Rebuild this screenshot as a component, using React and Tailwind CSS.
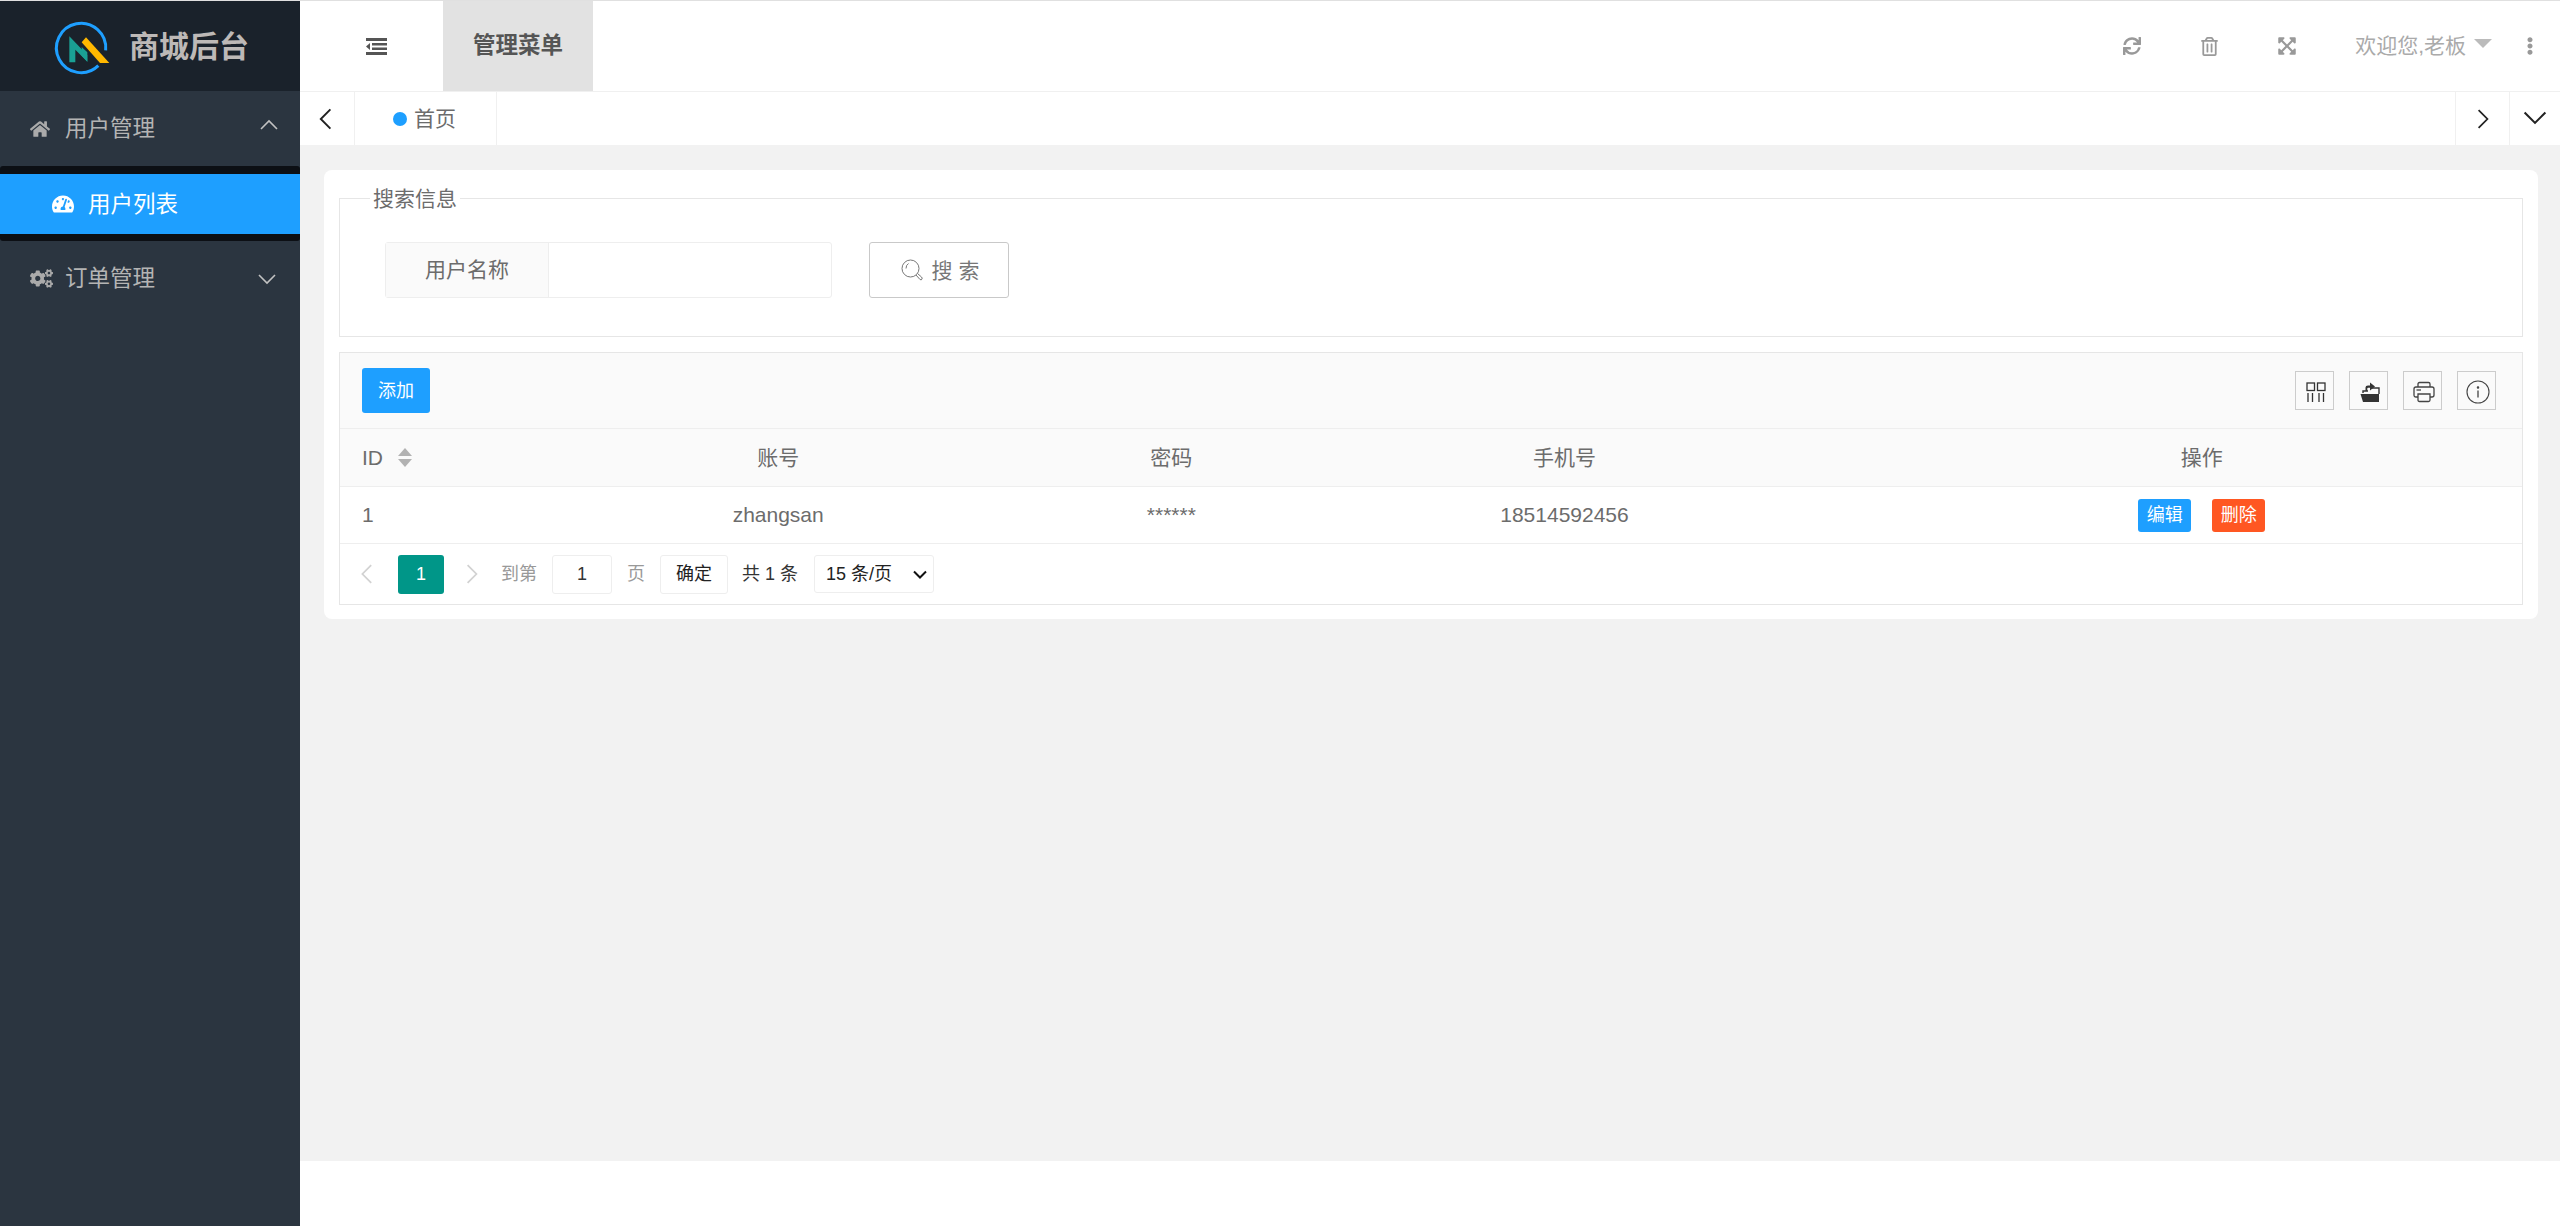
import { FaHome, FaTachometerAlt, FaCogs, FaSync, FaRegTrashAlt, FaExpandArrowsAlt, FaEllipsisV } from 'react-icons/fa';

const Chevron = ({ dir, className }) => {
  const paths = {
    up: 'M2 12 L10 4 L18 12',
    down: 'M2 5 L10 13 L18 5',
    left: 'M12 2 L4 10 L12 18',
    right: 'M6 2 L14 10 L6 18',
  };
  return (
    <svg viewBox="0 0 20 20" fill="none" stroke="currentColor" strokeWidth="1.6" className={className}>
      <path d={paths[dir]} />
    </svg>
  );
};

const Logo = () => (
  <svg viewBox="0 0 198 180" className="w-[66px] h-[60px] shrink-0 mt-[5px]">
    <path d="M145 140 A74 74 0 1 1 167 94" fill="none" stroke="#1e9fff" strokeWidth="9" />
    <path d="M58 52 L112 108 L112 128 L76 92 L76 130 L58 130 Z" fill="#1aa094" />
    <path d="M95 84 L112 100 L112 128 L95 110 Z" fill="#1aa094" />
    <path d="M95 70 L108 55 L178 132 L150 132 Z" fill="#ffb800" />
  </svg>
);

// menu collapse button
const ShrinkIcon = () => (
  <svg viewBox="0 0 21 17" fill="#555" className="w-[21px] h-[17px]">
    <rect width="21" height="3" />
    <rect x="6" y="5" width="15" height="2.5" />
    <rect x="6" y="9.5" width="15" height="2.5" />
    <rect y="14" width="21" height="3" />
    <path d="M4 5 L0 8.5 L4 12 Z" />
  </svg>
);

const ColsIcon = () => (
  <svg viewBox="0 0 20 20" fill="none" stroke="#333" strokeWidth="1.3" className="w-5 h-5">
    <rect x="1" y="1" width="7.5" height="7.5" />
    <rect x="11.5" y="1" width="7.5" height="7.5" />
    <path d="M2 11 V20 M6.5 11 V20 M13 11 V20 M17.5 11 V20" />
  </svg>
);

const ExportIcon = () => (
  <svg viewBox="0 0 20 20" className="w-5 h-5">
    <path d="M0.5 12 H19 V20 H3 Z" fill="#333" />
    <path d="M3 11 V9 H8 M12 6 H19 V12" fill="none" stroke="#333" strokeWidth="1.4" />
    <path d="M5.5 9 V5.5 Q5.5 3.5 8 3.5 H10 V0.5 L15 4.5 L10 8.5 V5.8 H8 Q7.3 5.8 7.3 6.6 V9 Z" fill="#333" />
  </svg>
);

const PrintIcon = () => (
  <svg viewBox="0 0 22 22" fill="none" stroke="#444" strokeWidth="1.3" className="w-[22px] h-[22px]">
    <path d="M5 6 V3 Q5 1.5 6.5 1.5 H15.5 Q17 1.5 17 3 V6" />
    <path d="M5 16 H3 Q1 16 1 14 V8 Q1 6 3 6 H19 Q21 6 21 8 V14 Q21 16 19 16 H17" />
    <path d="M5 13 H17 V19 Q17 20.5 15.5 20.5 H6.5 Q5 20.5 5 19 Z" />
    <path d="M3.5 9 H8" />
  </svg>
);

const InfoIcon = () => (
  <svg viewBox="0 0 24 24" fill="none" stroke="#444" strokeWidth="1.1" className="w-6 h-6">
    <circle cx="12" cy="12" r="11" />
    <path d="M12 10.5 V17.5" strokeWidth="1.3" />
    <circle cx="12" cy="7.5" r="0.7" fill="#444" />
  </svg>
);

const SearchIcon = () => (
  <svg viewBox="0 0 22 22" fill="none" stroke="#777" strokeWidth="1" className="w-[22px] h-[22px]">
    <circle cx="9.5" cy="9.5" r="8.5" />
    <path d="M5 9.5 Q5 6 7.5 4.5" />
    <path d="M15 16 L19 20.5 Q20.5 21.5 21 20 Q21.5 19 20.5 18 L16.5 14.5" />
  </svg>
);

const toolIcons = [ColsIcon, ExportIcon, PrintIcon, InfoIcon];

const tableRow = 'grid grid-cols-[119px_1fr_148px_1fr_1fr] items-center text-center';

export default function App() {
  return (
    <div
      className="flex flex-col h-screen overflow-hidden bg-white text-[21px] text-[#6c6c6c]"
      style={{ fontFamily: '"Liberation Sans", "Noto Sans CJK SC", sans-serif' }}
    >
      <div className="h-px shrink-0 bg-[#e0e0e0]" />
      <div className="flex flex-1 min-h-0">
        {/* Sidebar */}
        <aside className="w-[300px] shrink-0 bg-[#2b3540] text-[22.5px] text-[#b4b4b4]">
          <div className="h-[90px] bg-[#1a222b] flex items-center pl-[50px]">
            <Logo />
            <span className="ml-[13px] text-[30px] font-bold text-[#bdb9b7]">商城后台</span>
          </div>
          <div className="relative h-[75px] flex items-center pl-[30px]">
            <FaHome className="w-[20px] h-[20px] text-[#aaa]" />
            <span className="ml-[15px] mt-[1px]">用户管理</span>
            <Chevron dir="up" className="absolute right-[21px] top-[26px] w-[20px] h-[20px] text-[#c2c2c2]" />
          </div>
          <div className="h-[75px] bg-[#0c0f14] rounded-[3px] pt-[8px]">
            <div className="h-[60px] bg-[#1e9fff] flex items-center pl-[52px] text-white">
              <FaTachometerAlt className="w-[22px] h-[22px]" />
              <span className="ml-[14px] mt-[1px]">用户列表</span>
            </div>
          </div>
          <div className="relative h-[75px] flex items-center pl-[30px]">
            <FaCogs className="w-[23px] h-[23px] text-[#aaa]" />
            <span className="ml-[12px] mt-[1px]">订单管理</span>
            <Chevron dir="down" className="absolute right-[23px] top-[29px] w-[20px] h-[20px] text-[#c2c2c2]" />
          </div>
        </aside>

        <div className="flex-1 min-w-0 flex flex-col">
          {/* Top bar */}
          <header className="h-[90px] shrink-0 flex items-center">
            <div className="w-[143px] pl-[66px]">
              <ShrinkIcon />
            </div>
            <div className="w-[150px] h-full bg-[#e2e2e2] flex items-center justify-center text-[22.5px] font-bold text-[#555]">
              管理菜单
            </div>
            <div className="ml-auto flex items-center text-[#aaa]">
              <div className="w-[77px] flex justify-center"><FaSync className="w-[18px] h-[18px] text-[#999]" /></div>
              <div className="w-[78px] flex justify-center"><FaRegTrashAlt className="w-[17px] h-[19px] text-[#999]" /></div>
              <div className="w-[77px] flex justify-center"><FaExpandArrowsAlt className="w-[20px] h-[20px] text-[#999]" /></div>
              <span className="ml-[30px]">欢迎您,老板</span>
              <span className="ml-[8px] mb-[6px] w-0 h-0 border-x-[9px] border-x-transparent border-t-[9px] border-t-[#bbb]" />
              <div className="w-[68px] flex justify-center pl-[7px]"><FaEllipsisV className="w-[18px] h-[18px] text-[#999]" /></div>
            </div>
          </header>

          {/* Tab strip */}
          <div className="h-[54px] shrink-0 flex border-t border-[#f0f0f0] bg-white">
            <div className="w-[55px] flex items-center justify-center pl-[2px] border-r border-[#f0f0f0] text-[#222]">
              <Chevron dir="left" className="w-[24px] h-[24px]" />
            </div>
            <div className="w-[142px] flex items-center pl-[38px] border-r border-[#f0f0f0]">
              <span className="w-[14px] h-[14px] rounded-full bg-[#1e9fff]" />
              <span className="ml-[7px]">首页</span>
            </div>
            <div className="ml-auto w-[54px] flex items-center justify-center border-l border-[#f0f0f0] text-[#222]">
              <Chevron dir="right" className="w-[22px] h-[22px]" />
            </div>
            <div className="w-[51px] flex items-center justify-center border-l border-[#f0f0f0] text-[#222]">
              <Chevron dir="down" className="w-[26px] h-[26px]" />
            </div>
          </div>

          {/* Content */}
          <main className="flex-1 min-h-0 bg-[#f2f2f2] pt-[25px] pl-[24px] pr-[22px]">
            <div className="bg-white rounded-[8px] px-[15px] pt-[12px] pb-[14px]">
              <fieldset className="border border-[#e6e6e6]">
                <legend className="ml-[30px] px-[3px] pt-[2px] leading-[30px]">搜索信息</legend>
                <div className="flex pl-[45px] pt-[28px] pb-[38px]">
                  <div className="flex w-[447px] h-[56px] border border-[#eee] rounded-[3px]">
                    <div className="w-[163px] bg-[#fafafa] border-r border-[#eee] flex items-center justify-center">用户名称</div>
                    <input className="flex-1 min-w-0 outline-none px-3" />
                  </div>
                  <button className="ml-[37px] w-[140px] h-[56px] border border-[#c9c9c9] rounded-[3px] flex items-center justify-center pl-[2px] text-[#777]">
                    <SearchIcon />
                    <span className="ml-[9px] mt-[2px]">搜 索</span>
                  </button>
                </div>
              </fieldset>

              <div className="mt-[15px] border border-[#e6e6e6]">
                <div className="h-[75px] bg-[#fafafa] flex items-center pl-[22px] pr-[26px]">
                  <button className="w-[68px] h-[45px] rounded-[3px] bg-[#1e9fff] text-white text-[18px] pt-[1px]">添加</button>
                  <div className="ml-auto flex gap-[15px]">
                    {toolIcons.map((Icon, i) => (
                      <div key={i} className="w-[39px] h-[39px] border border-[#ccc] flex items-center justify-center pl-[2px] pt-[2px]">
                        <Icon />
                      </div>
                    ))}
                  </div>
                </div>

                <div className={`${tableRow} h-[58px] bg-[#fafafa] border-t border-[#eee]`}>
                  <div className="pl-[22px] flex items-center">
                    ID
                    <span className="ml-[15px] flex flex-col gap-[3px]">
                      <span className="w-0 h-0 border-x-[7px] border-x-transparent border-b-[8px] border-b-[#b2b2b2]" />
                      <span className="w-0 h-0 border-x-[7px] border-x-transparent border-t-[8px] border-t-[#b2b2b2]" />
                    </span>
                  </div>
                  <div>账号</div>
                  <div>密码</div>
                  <div>手机号</div>
                  <div className="pr-[2px]">操作</div>
                </div>

                <div className={`${tableRow} h-[57px] border-t border-[#eee]`}>
                  <div className="pl-[22px] text-left">1</div>
                  <div>zhangsan</div>
                  <div>******</div>
                  <div>18514592456</div>
                  <div className="flex justify-center gap-[21px] pr-[2px]">
                    <button className="w-[53px] h-[33px] rounded-[3px] bg-[#1e9fff] text-white text-[18px]">编辑</button>
                    <button className="w-[53px] h-[33px] rounded-[3px] bg-[#ff5722] text-white text-[18px]">删除</button>
                  </div>
                </div>

                {/* Pagination */}
                <div className="h-[61px] border-t border-[#eee] flex items-center text-[18px]">
                  <div className="ml-[11px] w-[36px] mr-[11px] flex justify-center text-[#d2d2d2]">
                    <Chevron dir="left" className="w-[22px] h-[22px]" />
                  </div>
                  <div className="w-[46px] h-[39px] rounded-[3px] bg-[#009688] text-white flex items-center justify-center">1</div>
                  <div className="w-[56px] flex justify-center text-[#d2d2d2]">
                    <Chevron dir="right" className="w-[22px] h-[22px]" />
                  </div>
                  <span className="ml-[1px] text-[#999]">到第</span>
                  <input defaultValue="1" className="ml-[15px] w-[60px] h-[39px] border border-[#eee] rounded-[3px] text-center text-[#333] outline-none" />
                  <span className="ml-[15px] text-[#999]">页</span>
                  <button className="ml-[15px] w-[68px] h-[39px] border border-[#eee] rounded-[3px] text-[#222]">确定</button>
                  <span className="ml-[14px] text-[#333]">共 1 条</span>
                  <div className="relative ml-[16px]">
                    <select className="w-[120px] h-[38px] border border-[#eee] rounded-[3px] bg-white text-[#222] pl-[11px] outline-none appearance-none block">
                      <option>15 条/页</option>
                    </select>
                    <svg viewBox="0 0 14 9" fill="none" stroke="#111" strokeWidth="2" className="absolute right-[7px] top-[15px] w-[14px] h-[9px] pointer-events-none">
                      <path d="M1 1.5 L7 7.5 L13 1.5" />
                    </svg>
                  </div>
                </div>
              </div>
            </div>
          </main>

          <footer className="h-[65px] shrink-0 bg-white" />
        </div>
      </div>
    </div>
  );
}
